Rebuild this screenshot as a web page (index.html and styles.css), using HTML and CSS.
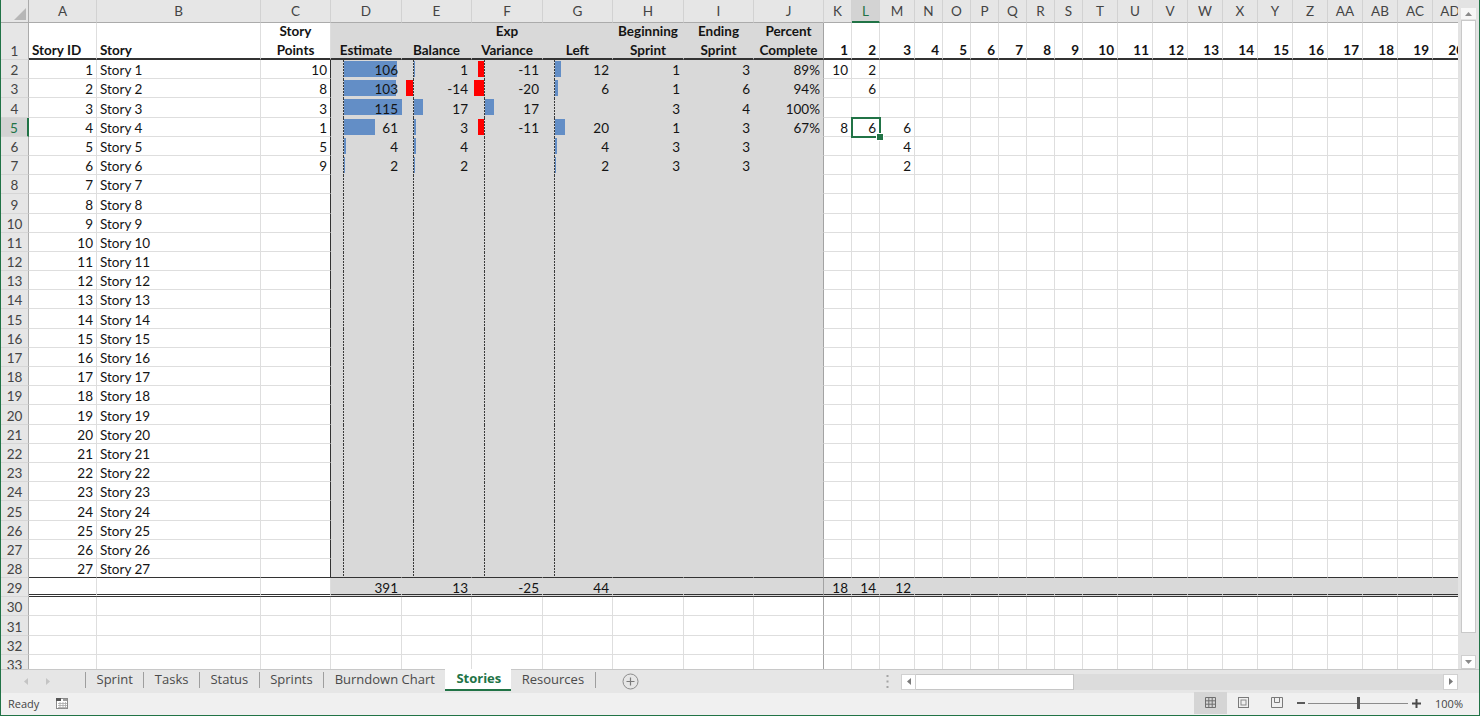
FILE: index.html
```html
<!DOCTYPE html>
<html lang="en">
<head>
<meta charset="utf-8">
<title>Stories</title>
<link rel="stylesheet" href="styles.css">
</head>
<body>
<div class="app">
  <div class="main">
    <div class="sheet-wrap">
      <div class="sheet" id="sheet"></div>
    </div>
    <div class="vscroll">
      <div class="vbtn up"><svg width="7" height="4" viewBox="0 0 7 4"><path d="M0 4 L3.5 0 L7 4 Z" fill="#8a8a8a"/></svg></div>
      <div class="vthumb"></div>
      <div class="vtrack"></div>
      <div class="vbtn down"><svg width="7" height="4" viewBox="0 0 7 4"><path d="M0 0 L7 0 L3.5 4 Z" fill="#8a8a8a"/></svg></div>
    </div>
  </div>
  <div class="tabbar">
    <div class="nav">
      <svg width="4" height="7" viewBox="0 0 4 7"><path d="M4 0 L0 3.5 L4 7 Z" fill="#c4c4c4"/></svg>
      <svg width="4" height="7" viewBox="0 0 4 7"><path d="M0 0 L4 3.5 L0 7 Z" fill="#c4c4c4"/></svg>
    </div>
    <span class="sep"></span>
    <div class="tab">Sprint</div>
    <span class="sep"></span>
    <div class="tab">Tasks</div>
    <span class="sep"></span>
    <div class="tab">Status</div>
    <span class="sep"></span>
    <div class="tab">Sprints</div>
    <span class="sep"></span>
    <div class="tab">Burndown Chart</div>
    <div class="tab active">Stories</div>
    <div class="tab">Resources</div>
    <span class="sep"></span>
    <div class="addsheet">
      <svg width="17" height="17" viewBox="0 0 17 17"><circle cx="8.5" cy="8.5" r="7.5" fill="none" stroke="#8c8c8c" stroke-width="1"/><path d="M8.5 4.5 V12.5 M4.5 8.5 H12.5" stroke="#7a7a7a" stroke-width="1.2"/></svg>
    </div>
    <div class="spacer"></div>
    <div class="splitter">
      <svg width="3" height="13" viewBox="0 0 3 13"><rect x="0.5" y="0" width="2" height="2" fill="#a4a4a4"/><rect x="0.5" y="5.5" width="2" height="2" fill="#a4a4a4"/><rect x="0.5" y="11" width="2" height="2" fill="#a4a4a4"/></svg>
    </div>
    <div class="hscroll">
      <div class="hbtn"><svg width="4" height="7" viewBox="0 0 4 7"><path d="M4 0 L0 3.5 L4 7 Z" fill="#7a7a7a"/></svg></div>
      <div class="hthumb"></div>
      <div class="htrack"></div>
      <div class="hbtn"><svg width="4" height="7" viewBox="0 0 4 7"><path d="M0 0 L4 3.5 L0 7 Z" fill="#7a7a7a"/></svg></div>
    </div>
  </div>
  <div class="statusbar">
    <span class="ready">Ready</span>
    <span class="macro">
      <svg width="12" height="11" viewBox="0 0 12 11"><rect x="0.5" y="0.5" width="11" height="10" fill="#fff" stroke="#8a8a8a"/><rect x="0" y="0" width="5" height="3" fill="#555"/><rect x="7" y="1" width="4" height="2" fill="#9a9a9a"/><path d="M2 5.5 H11 M2 7.5 H11 M2 9.5 H11 M4 4 V10.5 M7 4 V10.5 M9.5 4 V10.5" stroke="#a8a8a8" stroke-width="0.8"/></svg>
    </span>
    <div class="right">
      <div class="vb on"><svg width="11" height="11" viewBox="0 0 11 11"><path d="M0.5 0.5 H10.5 V10.5 H0.5 Z M0.5 3.8 H10.5 M0.5 7.2 H10.5 M3.8 0.5 V10.5 M7.2 0.5 V10.5" fill="none" stroke="#6e6e6e"/></svg></div>
      <div class="vb"><svg width="11" height="11" viewBox="0 0 11 11"><rect x="0.5" y="0.5" width="10" height="10" fill="none" stroke="#7a7a7a"/><rect x="3" y="3" width="5" height="5" fill="none" stroke="#8a8a8a"/></svg></div>
      <div class="vb"><svg width="12" height="11" viewBox="0 0 12 11"><path d="M0.5 0.5 H11.5 V10.5 H0.5 Z M3.5 0.5 V5.5 H8.5 V0.5" fill="none" stroke="#7a7a7a"/></svg></div>
      <div class="zoom">
        <svg class="zminus" width="8" height="2" viewBox="0 0 8 2"><rect width="8" height="2" fill="#5a5a5a"/></svg>
        <div class="slider"><span class="sl-line"></span><span class="sl-thumb"></span><span class="sl-line"></span></div>
        <svg class="zplus" width="9" height="9" viewBox="0 0 9 9"><path d="M4.5 0 V9 M0 4.5 H9" stroke="#4a4a4a" stroke-width="2"/></svg>
        <span class="pct">100%</span>
      </div>
    </div>
  </div>
</div>
<script src="app.js"></script>
</body>
</html>
```

FILE: styles.css
```css
* { box-sizing: border-box; }
html, body { margin: 0; padding: 0; }
body {
  width: 1480px;
  height: 716px;
  overflow: hidden;
  background: #fff;
  font-family: Lato, "Liberation Sans", sans-serif;
}
.app {
  width: 1480px;
  height: 716px;
  display: flex;
  flex-direction: column;
  border-left: 1px solid #217346;
  border-right: 1px solid #217346;
  border-bottom: 1px solid #217346;
}
.main { height: 669px; display: flex; flex: none; }
.sheet-wrap { width: 1457px; height: 669px; overflow: hidden; flex: none; }
.sheet {
  display: grid;
  grid-template-columns: 28px 68px 164px 70px 71px 70px 71px 70px 71px 70px 70px 28px 28px 35px repeat(6, 28px) repeat(11, 35px);
  grid-template-rows: 23px 37px repeat(32, 19.2px);
  font-size: 13.5px;
  color: #141414;
}

/* headers */
.corner {
  background: #e6e6e6;
  border-right: 1px solid #ababab;
  border-bottom: 1px solid #ababab;
  display: flex;
  justify-content: flex-end;
  align-items: flex-end;
  padding: 0 2px 2px 0;
}
.ch {
  background: #e6e6e6;
  border-right: 1px solid #d2d2d2;
  border-bottom: 1px solid #ababab;
  color: #444;
  text-align: center;
  line-height: 23px;
  white-space: nowrap;
  overflow: hidden;
}
.ch.sel {
  background: #d3d3d3;
  color: #217346;
  border-bottom: 2px solid #217346;
}
.rh {
  background: #e6e6e6;
  border-right: 1px solid #ababab;
  border-bottom: 1px solid #d6d6d6;
  color: #444;
  display: flex;
  align-items: flex-end;
  justify-content: center;
  line-height: 18px;
}
.rh .t { position: relative; top: 1px; }
.rh1 { line-height: 19px; }
.rh1 .t { top: 2px; }
.rh.sel {
  background: #d3d3d3;
  color: #217346;
  border-right: 2px solid #217346;
}

/* cells */
.c {
  position: relative;
  background: #fff;
  border-right: 1px solid #dedede;
  border-bottom: 1px solid #dedede;
  display: flex;
  align-items: flex-end;
  line-height: 18px;
  padding: 0 3px;
  white-space: nowrap;
}
.c .t { position: relative; top: 1px; }
.l { justify-content: flex-start; }
.r { justify-content: flex-end; }
.ctr { justify-content: center; text-align: center; }
.hd {
  font-weight: 700;
  line-height: 19px;
  white-space: pre-line;
  border-bottom: 2px solid #333;
}
.hd .t { top: 2px; }
.g { background: #d9d9d9; border-color: #d9d9d9; }
.hd.g { border-bottom-color: #333; }
.cr { border-right-color: #333; }
.jr { border-right-color: #a3a3a3; }
.b28 { border-bottom-color: #333; }
.b29 { border-bottom: 3px double #333; }
.b29 .t { top: 3px; }

/* data bar axis and bars */
.ax { --ax: 11px; }
.ax12 { --ax: 12px; }
.ax::before {
  content: "";
  position: absolute;
  left: var(--ax);
  top: 0;
  bottom: -1px;
  width: 1px;
  background: repeating-linear-gradient(to bottom, #3a3a3a 0 2px, transparent 2px 3px);
}
.bar {
  position: absolute;
  top: 1px;
  height: 16px;
}
.bar.pos { left: calc(var(--ax) + 1px); background: #638ec6; }
.bar.neg { right: calc(100% - var(--ax)); background: #ff0000; }

/* selected cell */
.selc::after {
  content: "";
  position: absolute;
  left: -1px;
  top: -1px;
  right: -2px;
  bottom: -2px;
  border: 2px solid #217346;
  z-index: 2;
}
.selc::before {
  content: "";
  position: absolute;
  right: -5px;
  bottom: -5px;
  width: 6px;
  height: 6px;
  background: #217346;
  border: 1px solid #fff;
  z-index: 3;
}

/* vertical scrollbar */
.vscroll {
  width: 21px;
  flex: none;
  background: #e3e3e3;
  display: flex;
  flex-direction: column;
  align-items: center;
  padding-top: 8px;
}
.vbtn {
  width: 15px;
  display: flex;
  align-items: center;
  justify-content: center;
  background: #f7f7f7;
}
.vbtn.up { height: 11px; }
.vbtn.down { height: 14px; background: #fff; border: 1px solid #cfcfcf; }
.vthumb {
  width: 15px;
  height: 613px;
  margin-top: 1px;
  background: #fff;
  border: 1px solid #c9c9c9;
}
.vtrack { flex: 1; width: 15px; }

/* sheet tabs */
.tabbar {
  height: 24px;
  flex: none;
  display: flex;
  align-items: stretch;
  background: #e6e6e6;
  border-top: 1px solid #c8c8c8;
  font-family: "Open Sans", "Noto Sans", sans-serif;
  font-size: 13px;
  color: #4a4a4a;
}
.nav {
  width: 84px;
  display: flex;
  align-items: center;
  padding-left: 23px;
  gap: 18px;
}
.sep {
  width: 1px;
  height: 16px;
  align-self: flex-start;
  margin-top: 2px;
  background: #9e9e9e;
}
.tab {
  display: flex;
  align-items: center;
  padding: 0 10.5px 5px 10.5px;
}
.tab.active {
  background: #fff;
  color: #217346;
  font-weight: 700;
  margin-top: -1px;
  padding: 0 10px 2px 11px;
  border-bottom: 2px solid #217346;
  margin-bottom: 2px;
}
.addsheet { display: flex; align-items: center; margin-left: 26px; }
.spacer { flex: 1; }
.splitter { display: flex; align-items: center; margin-right: 12px; }
.hscroll {
  width: 557px;
  height: 16px;
  align-self: center;
  margin-right: 21px;
  display: flex;
  background: #dcdcdc;
}
.hbtn {
  width: 15px;
  background: #fff;
  border: 1px solid #d0d0d0;
  display: flex;
  align-items: center;
  justify-content: center;
}
.hthumb {
  width: 158px;
  background: #fff;
  border: 1px solid #c6c6c6;
  border-left: none;
}
.htrack { flex: 1; }

/* status bar */
.statusbar {
  height: 22px;
  flex: none;
  display: flex;
  align-items: center;
  background: #f0f0f0;
  font-family: "Open Sans", "Noto Sans", sans-serif;
  font-size: 11px;
  color: #444;
  padding-left: 7px;
  padding-bottom: 2px;
}
.macro { display: flex; margin-left: 17px; }
.right {
  margin-left: auto;
  display: flex;
  align-items: center;
  height: 22px;
  margin-bottom: -2px;
  padding-bottom: 2px;
  padding-right: 16px;
}
.vb {
  width: 33px;
  height: 22px;
  display: flex;
  align-items: center;
  justify-content: center;
  padding-bottom: 2px;
}
.vb.on { background: #d5d5d5; }
.zoom { display: flex; align-items: center; margin-left: 4px; }
.slider { display: flex; align-items: center; width: 100px; margin: 0 4px 0 3px; }
.sl-line { flex: 1; height: 1px; background: #8c8c8c; }
.sl-thumb { width: 3px; height: 12px; background: #555; }
.pct { margin-left: 14px; }
```

FILE: app.js
```js
(function () {
  var sheet = document.getElementById('sheet');
  var letters = ['A','B','C','D','E','F','G','H','I','J','K','L','M','N','O','P','Q','R','S','T','U','V','W','X','Y','Z','AA','AB','AC','AD'];

  function add(cls, text) {
    var d = document.createElement('div');
    d.className = cls;
    if (text !== undefined && text !== null && text !== '') {
      var s = document.createElement('span');
      s.className = 't';
      s.textContent = String(text);
      d.appendChild(s);
    }
    sheet.appendChild(d);
    return d;
  }

  /* corner + column headers */
  var corner = document.createElement('div');
  corner.className = 'corner';
  corner.innerHTML = '<svg width="12" height="12" viewBox="0 0 12 12"><path d="M12 0 L12 12 L0 12 Z" fill="#b7b7b7"/></svg>';
  sheet.appendChild(corner);
  letters.forEach(function (l) {
    var d = document.createElement('div');
    d.className = 'ch' + (l === 'L' ? ' sel' : '');
    d.textContent = l;
    sheet.appendChild(d);
  });

  /* row 1: titles */
  var heads = ['Story ID', 'Story', 'Story\nPoints', 'Estimate', 'Balance', 'Exp\nVariance', 'Left', 'Beginning\nSprint', 'Ending\nSprint', 'Percent\nComplete'];
  add('rh rh1', '1');
  for (var i = 0; i < 30; i++) {
    var cls = 'c hd';
    var txt;
    if (i < 10) {
      txt = heads[i];
      cls += i < 2 ? ' l' : ' ctr';
      if (i >= 3) cls += ' g';
    } else {
      txt = i - 9;
      cls += ' r';
    }
    if (i === 9) cls += ' jr';
    add(cls, txt);
  }

  /* data */
  var data = {
    2: [1, 'Story 1', 10, 106, 1, -11, 12, 1, 3, '89%', 10, 2, ''],
    3: [2, 'Story 2', 8, 103, -14, -20, 6, 1, 6, '94%', '', 6, ''],
    4: [3, 'Story 3', 3, 115, 17, 17, '', 3, 4, '100%', '', '', ''],
    5: [4, 'Story 4', 1, 61, 3, -11, 20, 1, 3, '67%', 8, 6, 6],
    6: [5, 'Story 5', 5, 4, 4, '', 4, 3, 3, '', '', '', 4],
    7: [6, 'Story 6', 9, 2, 2, '', 2, 3, 3, '', '', '', 2]
  };
  var totals = ['', '', '', 391, 13, -25, 44, '', '', '', 18, 14, 12];

  for (var r = 2; r <= 33; r++) {
    add('rh' + (r === 5 ? ' sel' : ''), r);
    var row = data[r];
    if (!row && r <= 28) row = [r - 1, 'Story ' + (r - 1)];
    if (r === 29) row = totals;
    for (var c = 0; c < 30; c++) {
      var k = 'c' + (c === 1 ? ' l' : ' r');
      var gray = (c >= 3 && c <= 9 && r <= 29) || (r === 29 && c >= 3);
      if (gray) k += ' g';
      if (r <= 28 && c === 2) k += ' cr';
      if (c === 9) k += ' jr';
      if (r === 28) k += ' b28';
      if (r === 29) k += ' b29';
      var axis = r <= 28 && c >= 3 && c <= 6;
      if (axis) k += ' ax' + ((c === 3 || c === 5) ? ' ax12' : '');
      if (r === 5 && c === 11) k += ' selc';
      var v = row && c < row.length ? row[c] : '';
      var cell = document.createElement('div');
      cell.className = k;
      if (axis && typeof v === 'number') {
        var b = document.createElement('span');
        b.className = 'bar ' + (v < 0 ? 'neg' : 'pos');
        b.style.width = Math.max(1, Math.round(Math.abs(v) * 0.5)) + 'px';
        cell.appendChild(b);
      }
      if (v !== '' && v !== undefined) {
        var s = document.createElement('span');
        s.className = 't';
        s.textContent = String(v);
        cell.appendChild(s);
      }
      sheet.appendChild(cell);
    }
  }
})();
```
